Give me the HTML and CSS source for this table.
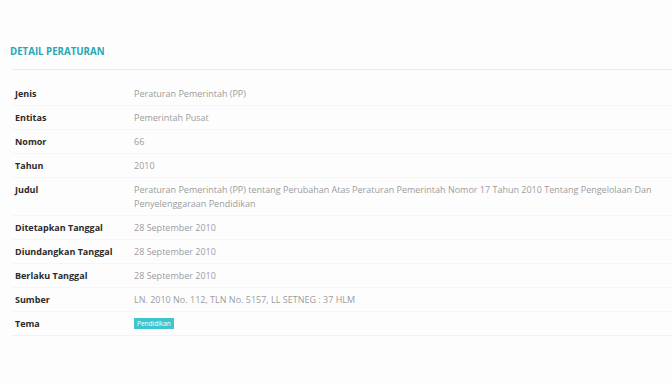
FILE: index.html
```html
<!DOCTYPE html>
<html>
<head>
    <title>Detail Peraturan</title>
    <link rel="stylesheet" href="styles.css">
</head>
<body>
    <div class="panel">
        <h4 class="panel-title">DETAIL PERATURAN</h4>
        <hr class="divider">

        <table class="detail-table">
            <tr>
                <th>Jenis</th>
                <td>Peraturan Pemerintah (PP)</td>
            </tr>
            <tr>
                <th>Entitas</th>
                <td>Pemerintah Pusat</td>
            </tr>
            <tr>
                <th>Nomor</th>
                <td>66</td>
            </tr>
            <tr>
                <th>Tahun</th>
                <td>2010</td>
            </tr>
            <tr>
                <th>Judul</th>
                <td>Peraturan Pemerintah (PP) tentang Perubahan Atas Peraturan Pemerintah Nomor 17 Tahun 2010 Tentang Pengelolaan Dan Penyelenggaraan Pendidikan</td>
            </tr>
            <tr>
                <th>Ditetapkan Tanggal</th>
                <td>28 September 2010</td>
            </tr>
            <tr>
                <th>Diundangkan Tanggal</th>
                <td>28 September 2010</td>
            </tr>
            <tr>
                <th>Berlaku Tanggal</th>
                <td>28 September 2010</td>
            </tr>
            <tr>
                <th>Sumber</th>
                <td>LN. 2010 No. 112, TLN No. 5157, LL SETNEG : 37 HLM</td>
            </tr>
            <tr>
                <th>Tema</th>
                <td><span class="badge">Pendidikan</span></td>
            </tr>
        </table>
    </div>
</body>
</html>
```

FILE: styles.css
```css
body {
    margin: 0;
    font-family: "Open Sans", "Liberation Sans", sans-serif;
    background-color: #fdfdfe;
    color: #333;
}
.panel {
    padding: 45px 0 0 10px;
}
.panel-title {
    margin: 0;
    font-size: 9.7px;
    font-weight: 700;
    color: #26a8b4;
    line-height: 14px;
}
.divider {
    border: none;
    border-top: 1px solid #ececf0;
    margin: 10px 0 12px 2px;
}
.detail-table {
    width: calc(100% - 2px);
    margin-left: 2px;
    border-collapse: collapse;
    font-size: 9px;
    line-height: 14px;
}
.detail-table th,
.detail-table td {
    padding: 5px 3px 4px;
    text-align: left;
    vertical-align: top;
    border-bottom: 1px solid #f5f6f8;
}
.detail-table tr:last-child th,
.detail-table tr:last-child td {
    border-bottom-color: #f1f2f6;
}
.detail-table th {
    width: 113px;
    font-weight: 700;
    color: #2b2b2b;
}
.detail-table td {
    color: #9c9c9c;
}
.badge {
    display: inline-block;
    background-color: #3ec5cf;
    color: #fff;
    font-size: 6.5px;
    line-height: 11px;
    padding: 0 3px;
    vertical-align: top;
    margin-top: 1px;
}
```
